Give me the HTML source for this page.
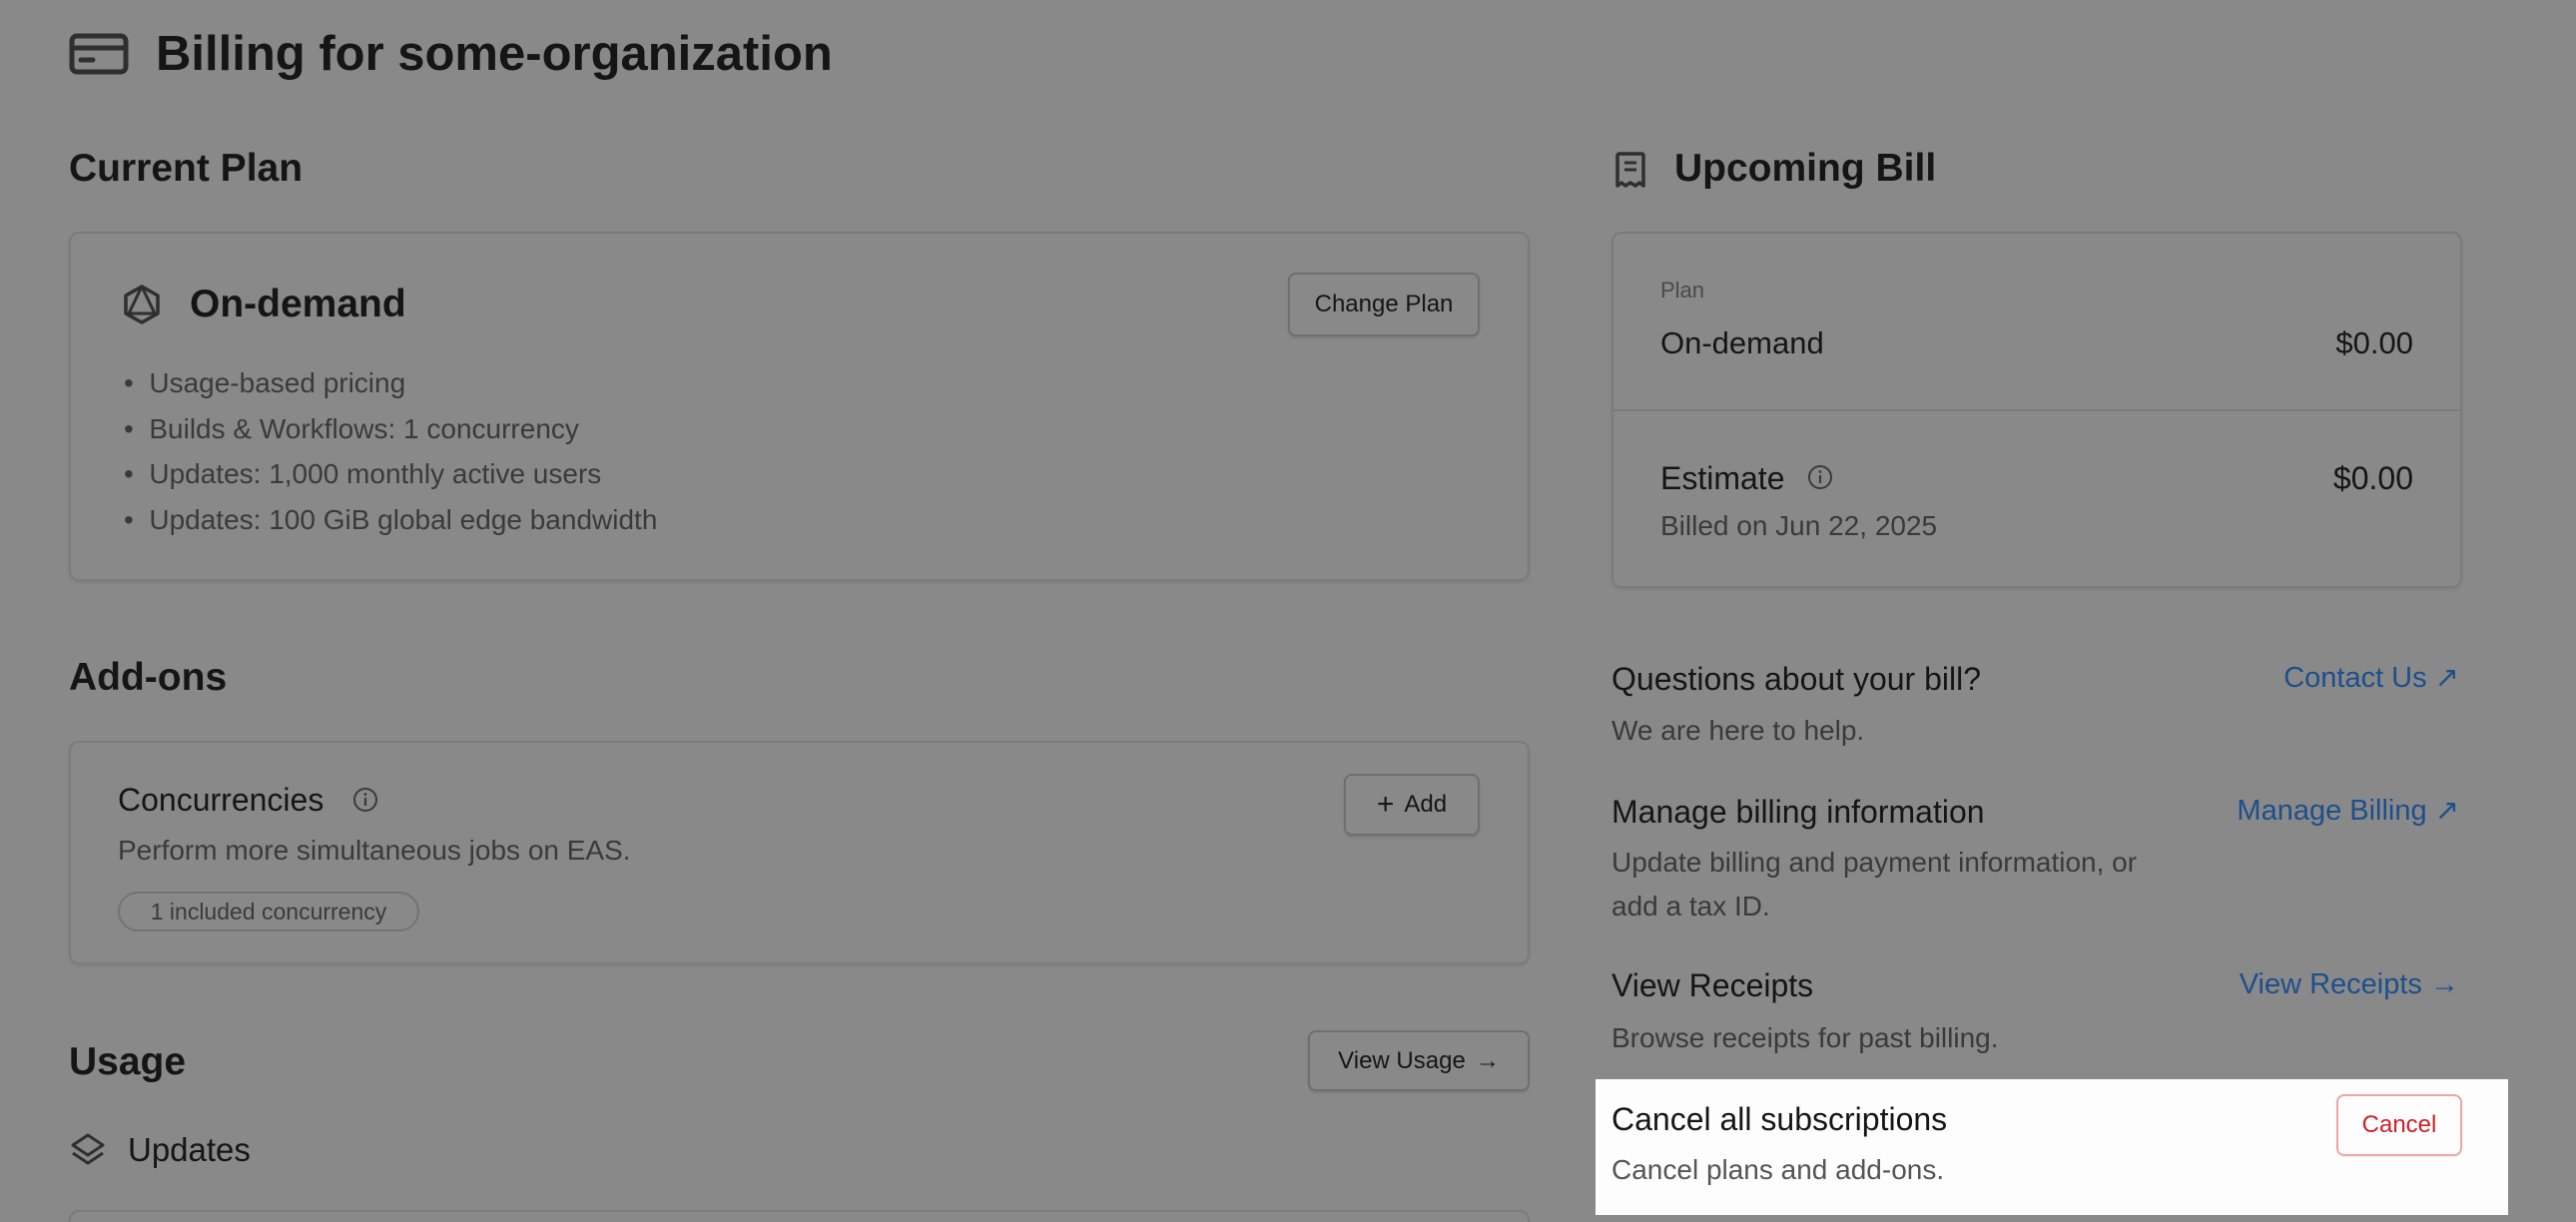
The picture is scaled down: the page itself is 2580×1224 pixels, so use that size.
<!DOCTYPE html>
<html style="overflow:hidden;width:2580px;height:1224px"><head><meta charset="utf-8"><style>
*{margin:0;padding:0;box-sizing:border-box}
body{width:2580px;height:1224px;background:#898989;font-family:"Liberation Sans",Arial,sans-serif;color:#151515;position:relative;overflow:hidden}
.t{position:absolute;white-space:nowrap}
.card{position:absolute;border:2px solid #7b7b7b;border-radius:10px;box-shadow:0 2px 3px rgba(0,0,0,0.08)}
.btn{position:absolute;border:2px solid #6f6f6f;border-radius:8px;font-size:24px;display:flex;align-items:center;justify-content:center;gap:10px;color:#151515;box-shadow:0 2px 2px rgba(0,0,0,0.1)}
.sec{color:#3a3a3a}
.link{color:#1d4f8c}
</style></head><body>

<svg class="t" style="left:69px;top:33px" width="60" height="42" viewBox="0 0 60 42"><rect x="3" y="3" width="54" height="36" rx="5" fill="none" stroke="#2f2f2f" stroke-width="5"/><line x1="3" y1="15" x2="57" y2="15" stroke="#2f2f2f" stroke-width="5"/><line x1="12" y1="27" x2="24" y2="27" stroke="#2f2f2f" stroke-width="5" stroke-linecap="round"/></svg>
<div class="t" style="left:156px;top:25px;font-size:49px;font-weight:700;line-height:58px">Billing for some-organization</div>

<div class="t" style="left:69px;top:146px;font-size:39px;font-weight:700;line-height:46px">Current Plan</div>
<div class="card" style="left:69px;top:232px;width:1463px;height:350px"></div>
<svg class="t" style="left:122px;top:284px" width="40" height="42" viewBox="0 0 40 42"><path d="M20 3 L36 12 L36 30 L20 39 L4 30 L4 12 Z" fill="none" stroke="#2f2f2f" stroke-width="3.5" stroke-linejoin="round"/><path d="M20 3 L7 30 L33 30 Z" fill="none" stroke="#2f2f2f" stroke-width="3" stroke-linejoin="round"/></svg>
<div class="t" style="left:190px;top:282px;font-size:39px;font-weight:700;line-height:46px">On-demand</div>
<div class="btn" style="left:1290px;top:273px;width:192px;height:64px">Change Plan</div>
<div class="t sec" style="left:124px;top:361px;font-size:28px;line-height:45.5px">
<div>•&nbsp; Usage-based pricing</div>
<div>•&nbsp; Builds &amp; Workflows: 1 concurrency</div>
<div>•&nbsp; Updates: 1,000 monthly active users</div>
<div>•&nbsp; Updates: 100 GiB global edge bandwidth</div>
</div>

<div class="t" style="left:69px;top:656px;font-size:39px;font-weight:700;line-height:46px">Add-ons</div>
<div class="card" style="left:69px;top:742px;width:1463px;height:224px"></div>
<div class="t" style="left:118px;top:781px;font-size:32px;line-height:40px">Concurrencies</div>
<svg class="t" style="left:352px;top:787px" width="28" height="28" viewBox="0 0 28 28"><circle cx="14" cy="14" r="11" fill="none" stroke="#3a3a3a" stroke-width="2"/><line x1="14" y1="12" x2="14" y2="20" stroke="#3a3a3a" stroke-width="2.2"/><circle cx="14" cy="8.5" r="1.4" fill="#3a3a3a"/></svg>
<div class="t sec" style="left:118px;top:835px;font-size:28px;line-height:34px">Perform more simultaneous jobs on EAS.</div>
<div class="t sec" style="left:118px;top:893px;width:302px;height:40px;border:2px solid #737373;border-radius:20px;font-size:23px;line-height:36px;text-align:center">1 included concurrency</div>
<div class="btn" style="left:1346px;top:775px;width:136px;height:62px"><span style="font-size:30px;font-weight:300">+</span>Add</div>

<div class="t" style="left:69px;top:1041px;font-size:39px;font-weight:700;line-height:46px">Usage</div>
<div class="btn" style="left:1310px;top:1032px;width:222px;height:61px">View Usage <span>→</span></div>
<svg class="t" style="left:69px;top:1134px" width="38" height="36" viewBox="0 0 38 36"><path d="M19 3 L34 13 L19 23 L4 13 Z" fill="none" stroke="#2f2f2f" stroke-width="3" stroke-linejoin="round"/><path d="M4 21 L19 31 L34 21" fill="none" stroke="#2f2f2f" stroke-width="3" stroke-linejoin="round"/></svg>
<div class="t" style="left:128px;top:1132px;font-size:33px;line-height:40px">Updates</div>
<div class="card" style="left:69px;top:1212px;width:1463px;height:12px;border-bottom:none;border-radius:10px 10px 0 0"></div>

<svg class="t" style="left:1617px;top:151px" width="32" height="38" viewBox="0 0 32 38"><path d="M3 35 L3 5 Q3 3 5 3 L27 3 Q29 3 29 5 L29 35 L25 32 L21 35 L16 32 L11 35 L7 32 Z" fill="none" stroke="#2f2f2f" stroke-width="3.5" stroke-linejoin="round"/><line x1="10" y1="12" x2="22" y2="12" stroke="#2f2f2f" stroke-width="3"/><line x1="10" y1="19" x2="22" y2="19" stroke="#2f2f2f" stroke-width="3"/></svg>
<div class="t" style="left:1677px;top:146px;font-size:39px;font-weight:700;line-height:46px">Upcoming Bill</div>
<div class="card" style="left:1614px;top:232px;width:852px;height:357px"></div>
<div style="position:absolute;left:1615px;top:410px;width:850px;height:2px;background:#7b7b7b"></div>
<div class="t sec" style="left:1663px;top:278px;font-size:22px;line-height:26px;color:#4a4a4a">Plan</div>
<div class="t" style="left:1663px;top:326px;font-size:31px;line-height:36px">On-demand</div>
<div class="t" style="right:163px;top:326px;font-size:31px;line-height:36px">$0.00</div>
<div class="t" style="left:1663px;top:460px;font-size:32px;line-height:38px;font-weight:500">Estimate</div>
<svg class="t" style="left:1809px;top:464px" width="28" height="28" viewBox="0 0 28 28"><circle cx="14" cy="14" r="11" fill="none" stroke="#3a3a3a" stroke-width="2"/><line x1="14" y1="12" x2="14" y2="20" stroke="#3a3a3a" stroke-width="2.2"/><circle cx="14" cy="8.5" r="1.4" fill="#3a3a3a"/></svg>
<div class="t" style="right:163px;top:460px;font-size:32px;line-height:38px;font-weight:500">$0.00</div>
<div class="t sec" style="left:1663px;top:510px;font-size:28px;line-height:34px">Billed on Jun 22, 2025</div>

<div class="t" style="left:1614px;top:661px;font-size:32px;line-height:38px">Questions about your bill?</div>
<div class="t link" style="right:117px;top:661px;font-size:29px;line-height:36px">Contact Us ↗</div>
<div class="t sec" style="left:1614px;top:715px;font-size:28px;line-height:34px">We are here to help.</div>

<div class="t" style="left:1614px;top:794px;font-size:32px;line-height:38px">Manage billing information</div>
<div class="t link" style="right:117px;top:794px;font-size:29px;line-height:36px">Manage Billing ↗</div>
<div class="t sec" style="left:1614px;top:842px;font-size:28px;line-height:44px">Update billing and payment information, or<br>add a tax ID.</div>

<div class="t" style="left:1614px;top:968px;font-size:32px;line-height:38px">View Receipts</div>
<div class="t link" style="right:117px;top:968px;font-size:29px;line-height:36px">View Receipts →</div>
<div class="t sec" style="left:1614px;top:1023px;font-size:28px;line-height:34px">Browse receipts for past billing.</div>

<div style="position:absolute;left:1598px;top:1081px;width:914px;height:136px;background:#fdfdfd"></div>
<div class="t" style="left:1614px;top:1102px;font-size:32px;line-height:38px">Cancel all subscriptions</div>
<div class="t" style="left:1614px;top:1155px;font-size:28px;line-height:34px;color:#555">Cancel plans and add-ons.</div>
<div class="btn" style="left:2340px;top:1096px;width:126px;height:62px;border-color:#f0a5a5;color:#d0202a;box-shadow:0 1px 2px rgba(0,0,0,0.06)">Cancel</div>

</body></html>
